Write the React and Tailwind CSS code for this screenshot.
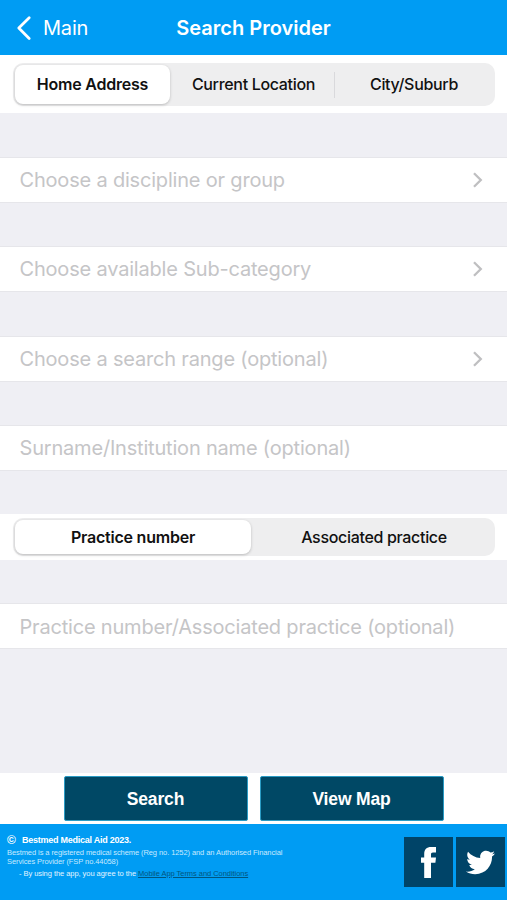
import React, { useState } from 'react';
import { FaTwitter } from 'react-icons/fa';

const Chevron = () => (
  <svg width="12" height="18" viewBox="0 0 12 18" fill="none" stroke="#bfbfc1" strokeWidth="2.3">
    <path d="M2 2.2 8.8 9 2 15.8" />
  </svg>
);

const FacebookIcon = () => (
  <svg width="16" height="31" viewBox="0 0 16 31" fill="#fff">
    <path d="M3.2 31V15.8H0V10.4h3.2V7.2C3.2 2.4 5.6 0 10.2 0H15v5.6h-3c-1.6 0-2 .7-2 2v2.8h5l-.6 5.4H10V31z" />
  </svg>
);

// White form row, with an optional disclosure arrow
const Row = ({ label, arrow, className }) => (
  <div className={`flex items-center justify-between border-y border-[#e6e6ea] bg-white pl-[19.5px] pr-[23px] text-[20px] tracking-[-0.19px] text-[#c5c5c7] ${className}`}>
    <span className="whitespace-nowrap">{label}</span>
    {arrow && <Chevron />}
  </div>
);

const Segment = ({ label, active, onClick, className }) => (
  <button
    onClick={onClick}
    className={`flex items-center justify-center whitespace-nowrap text-[16px] text-[#111] ${
      active
        ? 'rounded-[8px] bg-white font-semibold tracking-[-0.22px] shadow-[0_1px_3px_rgba(0,0,0,0.22)]'
        : 'font-medium tracking-[-0.32px]'
    } ${className}`}
  >
    {label}
  </button>
);

const App = () => {
  const [place, setPlace] = useState(0);
  const [practice, setPractice] = useState(0);

  return (
    <div className="flex h-[900px] w-[507px] flex-col overflow-hidden bg-[#efeff4] font-['Inter',sans-serif]">
      <header className="grid h-[55px] shrink-0 grid-cols-[1fr_auto_1fr] items-center bg-[#009cf3] text-white">
        <div className="flex items-center gap-[11px] pl-[16px]">
          <svg width="16" height="26" viewBox="0 0 16 26" fill="none" stroke="#fff" strokeWidth="2.8" strokeLinecap="round" strokeLinejoin="round">
            <path d="M13.2 2.8 2.8 13l10.4 10.4" />
          </svg>
          <span className="text-[20px] tracking-[-0.2px]">Main</span>
        </div>
        <h1 className="text-[20px] font-semibold">Search Provider</h1>
      </header>

      <div className="h-[58px] shrink-0 bg-white pl-[13px] pr-[12px] pt-[8px]">
        <div className="flex h-[43px] items-center rounded-[10px] bg-[#eeeeef] p-[2px]">
          <Segment label="Home Address" active={place === 0} onClick={() => setPlace(0)} className="h-[39px] w-[155px] pb-px" />
          <Segment label="Current Location" active={place === 1} onClick={() => setPlace(1)} className="h-[39px] w-[164px] pb-px pl-[3px]" />
          <span className="h-[26px] w-px bg-[#d9d9dc]" />
          <Segment label="City/Suburb" active={place === 2} onClick={() => setPlace(2)} className="h-[39px] flex-1 pb-px" />
        </div>
      </div>

      <Row label="Choose a discipline or group" arrow className="mt-[44px] h-[46px] shrink-0" />
      <Row label="Choose available Sub-category" arrow className="mt-[43px] h-[46px] shrink-0" />
      <Row label="Choose a search range (optional)" arrow className="mt-[44px] h-[46px] shrink-0" />
      <Row label="Surname/Institution name (optional)" className="mt-[43px] h-[46px] shrink-0" />

      <div className="mt-[43px] h-[46px] shrink-0 bg-white pl-[13px] pr-[12px] pt-[4px]">
        <div className="flex h-[38px] items-center rounded-[10px] bg-[#eeeeef] p-[2px]">
          <Segment label="Practice number" active={practice === 0} onClick={() => setPractice(0)} className="h-[34px] w-[236px]" />
          <Segment label="Associated practice" active={practice === 1} onClick={() => setPractice(1)} className="h-[34px] flex-1 pl-[4px]" />
        </div>
      </div>

      <Row label="Practice number/Associated practice (optional)" className="mt-[43px] h-[46px] shrink-0 pt-[2px]" />

      <div className="mt-auto flex h-[51px] shrink-0 justify-center gap-[12px] bg-white pt-[3px] font-['Liberation_Sans',sans-serif] text-[17.5px] font-bold tracking-[-0.15px] text-white">
        <button className="h-[45px] w-[184px] rounded-[2px] border border-[#2a9bc4] bg-[#004865] pt-px">Search</button>
        <button className="h-[45px] w-[184px] rounded-[2px] border border-[#2a9bc4] bg-[#004865] pt-px">View Map</button>
      </div>

      <footer className="flex h-[76px] shrink-0 justify-between bg-[#009cf3] pl-[7px] pr-[2px] font-['Liberation_Sans',sans-serif] text-white">
        <div className="pt-[10px]">
          <div className="flex items-center text-[9px] font-bold leading-[13px] tracking-[-0.25px]">
            <span className="w-[15px] text-[12px] font-bold">©</span>
            <span>Bestmed Medical Aid 2023.</span>
          </div>
          <p className="mt-[2px] whitespace-nowrap text-[7.5px] leading-[8.5px] tracking-[-0.08px] text-[#c8eaff]">
            Bestmed is a registered medical scheme (Reg no. 1252) and an Authorised Financial
            <br />
            Services Provider (FSP no.44058)
          </p>
          <p className="mt-[3px] whitespace-nowrap pl-[12px] text-[7.5px] leading-[9px] tracking-[-0.05px] text-[#e4f5ff]">
            - By using the app, you agree to the <a className="text-[#00567f] underline">Mobile App Terms and Conditions</a>
          </p>
        </div>
        <div className="flex gap-[3px] pt-[13px]">
          <a className="flex h-[50px] w-[49px] items-center justify-center bg-[#004468]">
            <FacebookIcon />
          </a>
          <a className="flex h-[50px] w-[49px] items-center justify-center bg-[#004468]">
            <FaTwitter className="h-[29px] w-[29px]" />
          </a>
        </div>
      </footer>
    </div>
  );
};

export default App;
